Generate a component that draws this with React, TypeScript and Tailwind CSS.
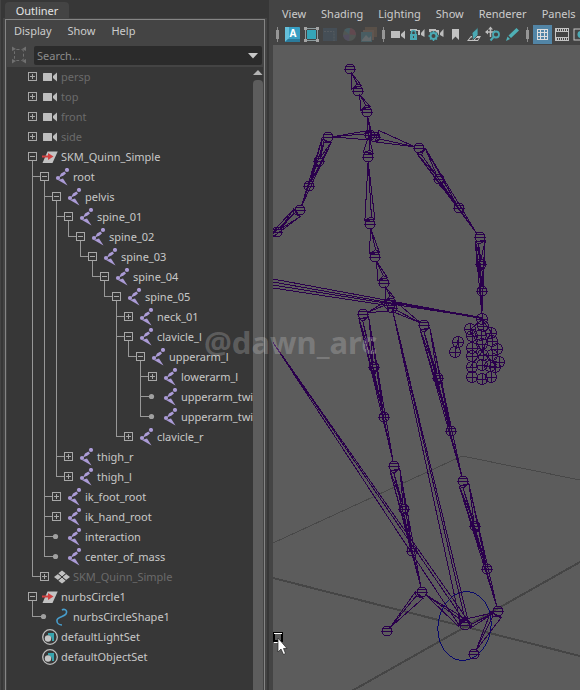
import type { ReactNode } from "react";

type IconKind = "camera" | "transform" | "joint" | "mesh" | "curve" | "set";

interface TreeNode {
  label: string;
  icon: IconKind;
  dim?: boolean;
  toggle?: "open" | "closed" | "leaf" | "none";
  children?: TreeNode[];
}

const joint = (label: string, toggle: TreeNode["toggle"], children?: TreeNode[]): TreeNode => ({
  label,
  icon: "joint",
  toggle,
  children,
});

const camera = (label: string): TreeNode => ({ label, icon: "camera", dim: true, toggle: "closed" });

const scene: TreeNode[] = [
  camera("persp"),
  camera("top"),
  camera("front"),
  camera("side"),
  {
    label: "SKM_Quinn_Simple",
    icon: "transform",
    toggle: "open",
    children: [
      joint("root", "open", [
        joint("pelvis", "open", [
          joint("spine_01", "open", [
            joint("spine_02", "open", [
              joint("spine_03", "open", [
                joint("spine_04", "open", [
                  joint("spine_05", "open", [
                    joint("neck_01", "closed"),
                    joint("clavicle_l", "open", [
                      joint("upperarm_l", "open", [
                        joint("lowerarm_l", "closed"),
                        joint("upperarm_twi", "leaf"),
                        joint("upperarm_twi", "leaf"),
                      ]),
                    ]),
                    joint("clavicle_r", "closed"),
                  ]),
                ]),
              ]),
            ]),
          ]),
          joint("thigh_r", "closed"),
          joint("thigh_l", "closed"),
        ]),
        joint("ik_foot_root", "closed"),
        joint("ik_hand_root", "closed"),
        joint("interaction", "leaf"),
        joint("center_of_mass", "leaf"),
      ]),
      { label: "SKM_Quinn_Simple", icon: "mesh", dim: true, toggle: "closed" },
    ],
  },
  {
    label: "nurbsCircle1",
    icon: "transform",
    toggle: "open",
    children: [{ label: "nurbsCircleShape1", icon: "curve", toggle: "leaf" }],
  },
  { label: "defaultLightSet", icon: "set", toggle: "none" },
  { label: "defaultObjectSet", icon: "set", toggle: "none" },
];

function NodeIcon({ kind }: { kind: IconKind }) {
  return (
    <svg width="16" height="18" viewBox="0 0 16 18" className="mt-px ml-[5px] shrink-0" aria-hidden="true">
      {kind === "camera" && (
        <g fill="#bdbdbd">
          <rect x="1" y="5" width="9" height="8" rx="0.5" />
          <path d="M11 8 15 4.500V13.500L11 10Z" />
        </g>
      )}
      {kind === "transform" && (
        <g>
          <path d="M5.500 3.500H15.700L10.500 15H0.500Z" fill="#c3c3c3" />
          <path d="M0 8.500H7" stroke="#d24040" strokeWidth="2" />
          <path d="M6 5 11.500 8.500 6 12Z" fill="#d24040" />
        </g>
      )}
      {kind === "joint" && (
        <g fill="#ab9bd6">
          <circle cx="13" cy="2" r="2.100" />
          <circle cx="4" cy="10" r="2.100" />
          <path d="M5 9.500 7 5.500 10.500 3.500 12 5.500 9.500 7.500Z" />
          <path d="M4 12 9 10.500 13.500 17.500Z" />
        </g>
      )}
      {kind === "mesh" && (
        <g fill="#c0c0c0">
          <path d="M8 2.500 12 5.500 8 8.500 4 5.500Z" />
          <path d="M4 6 8 9 4 12 0 9Z" />
          <path d="M12 6 16 9 12 12 8 9Z" />
          <path d="M8 9.500 12 12.500 8 15.500 4 12.500Z" />
          <path d="M4 5.500 12 12.500M12 5.500 4 12.500" stroke="#373737" />
        </g>
      )}
      {kind === "curve" && (
        <path
          d="M8 2C10 0.500 14 2 12 6 10 9 2 9 3 13 3 15 5 17 8 17"
          fill="none"
          stroke="#479dcc"
          strokeWidth="1.600"
        />
      )}
      {kind === "set" && (
        <g>
          <circle cx="8" cy="9" r="7.300" fill="none" stroke="#bdbdbd" strokeWidth="1.300" />
          <path d="M6 5H12V13H10A5 5 0 0 0 6 7Z" fill="#38a3ad" />
          <circle cx="6" cy="10.500" r="3.200" fill="#c6c6c6" />
        </g>
      )}
    </svg>
  );
}

function Guide({ kind }: { kind: "none" | "line" | "tee" | "elbow" }) {
  return (
    <span className="flex w-3 shrink-0 flex-col pl-1.5">
      {kind !== "none" && (
        <span
          className={
            kind === "line" ? "h-[10px] border-l border-[#989898]" : "h-[10px] border-b border-l border-[#989898]"
          }
        />
      )}
      {(kind === "line" || kind === "tee") && <span className="h-[10px] border-l border-[#989898]" />}
    </span>
  );
}

function Toggle({ node, nested }: { node: TreeNode; nested: boolean }) {
  const open = node.toggle === "open";
  return (
    <>
      <span className={nested ? "h-[10px] w-0.5 shrink-0 border-b border-[#989898]" : "w-0.5 shrink-0"} />
      <span className="flex w-[9px] shrink-0 flex-col">
        {(open || node.toggle === "closed") && (
          <>
            <button type="button" aria-label={`Toggle ${node.label}`} className="mt-[5px] block h-[9px] w-[9px]">
              <svg width="9" height="9" shapeRendering="crispEdges" stroke="#a8a8a8" fill="none" className="block">
                <rect x="0.500" y="0.500" width="8" height="8" />
                <path d={open ? "M2 4.500H7" : "M2 4.500H7M4.500 2V7"} />
              </svg>
            </button>
            {open && <span className="ml-1 h-1.5 border-l border-[#989898]" />}
          </>
        )}
        {node.toggle === "leaf" && (
          <svg width="9" height="20">
            <path d="M0 9.500H4" stroke="#989898" />
            <circle cx="3.500" cy="9.500" r="2.600" fill="#a0a0a0" />
          </svg>
        )}
      </span>
    </>
  );
}

function Branch({ nodes, trail }: { nodes: TreeNode[]; trail: boolean[] }) {
  const depth = trail.length;
  return (
    <ul>
      {nodes.map((node, i) => {
        const last = i === nodes.length - 1;
        return (
          <li key={i}>
            <div className="flex h-5 pl-[19px]">
              {trail.slice(1).map((more, k) => (
                <Guide key={k} kind={more ? "line" : "none"} />
              ))}
              {depth > 0 && <Guide kind={last ? "elbow" : "tee"} />}
              <Toggle node={node} nested={depth > 0} />
              <NodeIcon kind={node.icon} />
              <span
                className={
                  node.dim
                    ? "ml-[3px] whitespace-nowrap text-[#6b6b6b]"
                    : "ml-[3px] whitespace-nowrap"
                }
              >
                {node.label}
              </span>
            </div>
            {node.children && <Branch nodes={node.children} trail={[...trail, !last]} />}
          </li>
        );
      })}
    </ul>
  );
}

function Outliner() {
  return (
    <aside className="flex w-[269px] shrink-0 flex-col border-l border-[#444444] bg-[#373737]">
      <h1 className="mt-0.5 ml-1 flex h-4 w-16 items-center justify-center rounded-t-sm bg-[#444444] pt-0.5 text-[#e4e4e4]">
        Outliner
      </h1>
      <div className="mr-0.5 ml-0.5 flex min-h-0 flex-1 flex-col bg-[#444444] px-0.5 pt-px">
        <div className="flex min-h-0 flex-1 flex-col border border-b-0 border-[#858585] px-px">
          <nav className="flex h-[21px] items-center gap-4 pl-[7px] text-[#cccccc]">
            <button type="button">Display</button>
            <button type="button">Show</button>
            <button type="button">Help</button>
          </nav>
          <div className="flex h-[26px] items-start pt-[5px] pr-px pl-[5px]">
            <svg width="14" height="18" fill="none" stroke="#707070" aria-hidden="true" className="shrink-0">
              <rect x="2.500" y="3.500" width="9" height="11" rx="2" strokeDasharray="3 2" />
              <path d="M0 0.500 4 3 0 5ZM14 0.500 10 3 14 5ZM0 17.500 4 15 0 13ZM14 17.500 10 15 14 13Z" fill="#707070" stroke="none" />
            </svg>
            <label className="ml-2 flex h-[19px] min-w-0 flex-1 items-center rounded-xs bg-[#2b2b2b] pr-1 pl-[3px]">
              <input
                type="search"
                aria-label="Search"
                placeholder="Search..."
                className="min-w-0 flex-1 bg-transparent outline-none placeholder:text-[#8c8c8c]"
              />
              <svg width="10" height="6" aria-hidden="true">
                <path d="M0 0H10L5 5.500Z" fill="#c8c8c8" />
              </svg>
            </label>
          </div>
          <div className="flex min-h-0 flex-1 bg-[#373737] text-[#c8c8c8]">
            <div className="min-w-0 flex-1 overflow-hidden leading-5">
              <Branch nodes={scene} trail={[]} />
            </div>
            <div className="flex w-[10px] flex-col">
              <svg width="10" height="13" className="shrink-0" aria-hidden="true">
                <path d="M0 8H9.500L5 3Z" fill="#b4b4b4" />
              </svg>
              <div className="flex-1 rounded-t-sm bg-[#5d5d5d]" />
            </div>
          </div>
        </div>
      </div>
    </aside>
  );
}

function Tool({ label, active, faded, children }: { label: string; active?: boolean; faded?: boolean; children: ReactNode }) {
  const base = "flex h-[19px] w-[19px] shrink-0 items-center justify-center";
  return (
    <button type="button" aria-label={label} className={active ? `${base} bg-[#5285a6]` : faded ? `${base} opacity-30` : base}>
      <svg width="17" height="17" viewBox="0 0 17 17" fill="none">
        {children}
      </svg>
    </button>
  );
}

function Divider() {
  return (
    <svg width="11" height="19" className="shrink-0" aria-hidden="true">
      <path d="M5.500 2V17" stroke="#8a8a8a" />
      <path d="M5.500 5V14" stroke="#969696" strokeWidth="3" />
    </svg>
  );
}

function CameraMark() {
  return <path d="M3 4H11V9H3ZM12 7 15.500 3V11L12 9Z" fill="#bdbdbd" />;
}

function Toolbar() {
  return (
    <div className="flex h-[19px] overflow-hidden pl-[3px]">
      <Divider />
      <Tool label="Arnold">
        <rect x="1" y="1" width="15" height="15" rx="1" fill="#379fc4" />
        <path d="M1 1H5V12L1 16Z" fill="#65bfda" />
        <path d="M1 16 4 13H16V16Z" fill="#2b7b9b" />
        <text x="9" y="11" textAnchor="middle" fontSize="10" fontWeight="700" fill="#ffffff">
          A
        </text>
      </Tool>
      <Tool label="Region">
        <rect x="4" y="4" width="9" height="9" fill="#35a5b8" />
        <path d="M2.500 1V16M14.500 1V16M1 2.500H16M1 14.500H16" stroke="#8d9c9f" />
        <path d="M1 1H4V4H1ZM13 1H16V4H13ZM1 13H4V16H1ZM13 13H16V16H13Z" fill="#a5a5a5" />
      </Tool>
      <Tool label="Crop" faded>
        <rect x="1" y="2" width="14" height="13" fill="#4a6880" />
        <path d="M2 5.500H12V15" stroke="#8090a0" strokeDasharray="2 1" />
      </Tool>
      <Tool label="Colour" faded>
        <circle cx="8.500" cy="8.500" r="6.500" fill="#718078" />
        <path d="M8.500 8.500 3 4A7 7 0 0 1 9 2Z" fill="#4e96a8" />
        <path d="M8.500 8.500 9 2A7 7 0 0 1 15 9Z" fill="#a5566a" />
        <path d="M8.500 8.500 2 9A7 7 0 0 0 8 15Z" fill="#72679c" />
      </Tool>
      <Tool label="Images" faded>
        <path d="M5 1H17V11H5Z" fill="#8c6e54" />
        <path d="M3 4H14V14H3Z" fill="#a27d6a" />
        <path d="M1 6H12V16H1Z" fill="#5597a8" />
        <path d="M2 14 6 9 9 12 11 10V15H2Z" fill="#b0c0c4" />
      </Tool>
      <Divider />
      <Tool label="Select camera">
        <path d="M1 5H10V12H1ZM11 8 15 4.500V13L11 10Z" fill="#bdbdbd" />
      </Tool>
      <Tool label="Lock camera">
        <CameraMark />
        <path d="M1 3H8V6H1Z" fill="#bdbdbd" />
        <rect x="0" y="5" width="9" height="11" fill="#444444" />
        <rect x="1" y="8" width="7" height="6" fill="#4aa9b4" />
        <path d="M2.500 8V6.500A2 2 0 0 1 6.500 6.500V8" stroke="#4aa9b4" strokeWidth="1.500" />
        <path d="M4.500 10V12" stroke="#444444" />
      </Tool>
      <Tool label="Camera attributes">
        <CameraMark />
        <path d="M1 3H8V6H1Z" fill="#bdbdbd" />
        <circle cx="5.500" cy="10" r="5" fill="#444444" />
        <circle cx="5.500" cy="10" r="3" stroke="#4aa9b4" strokeWidth="2" />
        <path d="M5.500 5V6.500M5.500 13.500V15M0.500 10H2M9 10H10.500M2 6.500 3 7.500M9 6.500 8 7.500M2 13.500 3 12.500M9 13.500 8 12.500" stroke="#4aa9b4" strokeWidth="1.500" />
      </Tool>
      <Tool label="Bookmarks">
        <path d="M5 3H12V14L8.500 10.500 5 14Z" fill="#c3c3c3" />
      </Tool>
      <Tool label="Image plane">
        <path d="M1 15 5 10H15L12 15Z" fill="#c3c3c3" />
        <path d="M3 14 5 11.500H8L6 14ZM10 12H13L11.500 14H9Z" fill="#444444" />
        <path d="M6 7 12 1.500V9L7 14Z" fill="#4aa9b4" stroke="#444444" strokeWidth="0.800" />
      </Tool>
      <Tool label="Pan and zoom">
        <path d="M1 6H10M5.500 2V11" stroke="#bdbdbd" strokeWidth="1.500" />
        <path d="M0 6 3 3.500V8.500ZM5.500 0.500 8 3.500H3ZM11 6 9 4V8Z" fill="#bdbdbd" />
        <circle cx="11" cy="8.500" r="3" fill="#444444" stroke="#4aa9b4" strokeWidth="1.800" />
        <path d="M8.500 11 5.500 14.500" stroke="#4aa9b4" strokeWidth="2" />
      </Tool>
      <Tool label="Grease pencil">
        <path d="M2 15 3.500 10.500 6 13ZM4.500 9.500 12.500 2 15 4.500 7 12Z" fill="#4fb0b6" />
      </Tool>
      <Divider />
      <Tool label="Grid" active>
        <path d="M3.500 3.500H13.500V13.500H3.500ZM6.500 3V14M10.500 3V14M3 6.500H14M3 10.500H14" stroke="#dddddd" shapeRendering="crispEdges" />
      </Tool>
      <Tool label="Film gate">
        <path
          d="M2.500 3V14M15.500 3V14M2 5.500H16M2 11.500H16M2 2.500H16M2 14.500H16"
          stroke="#c3c3c3"
          shapeRendering="crispEdges"
        />
        <path d="M3 4H16M3 13H16" stroke="#c3c3c3" strokeWidth="2" strokeDasharray="1 1" shapeRendering="crispEdges" />
      </Tool>
      <Tool label="Resolution gate">
        <rect x="2" y="3" width="14" height="11" stroke="#c3c3c3" />
        <circle cx="9" cy="8.500" r="3.500" fill="#4aa9b4" />
      </Tool>
    </div>
  );
}

type Point = [number, number];

/* Each limb: root joint, end joint, and the twist joints between them. */
const limbs: { from: Point; to: Point; twists: Point[] }[] = [
  { from: [328, 137], to: [300, 210], twists: [[319, 161], [309, 186]] },
  { from: [300, 210], to: [256, 250], twists: [[277, 232]] },
  { from: [419, 148], to: [479, 237], twists: [[439, 179], [459, 208]] },
  { from: [480, 237], to: [482, 318], twists: [[481, 264], [482, 291]] },
  { from: [363, 314], to: [394, 466], twists: [[374, 367], [384, 417]] },
  { from: [394, 466], to: [422, 592], twists: [[404, 509], [412, 551]] },
  { from: [424, 325], to: [463, 481], twists: [[438, 378], [451, 431]] },
  { from: [463, 481], to: [498, 611], twists: [[475, 526], [487, 569]] },
];

const bones: { from: Point; to: Point; width: number }[] = [
  { from: [358, 91], to: [350, 69], width: 5 },
  { from: [367, 112], to: [358, 91], width: 5 },
  { from: [370, 136], to: [367, 112], width: 2 },
  { from: [368, 157], to: [369, 132], width: 5 },
  { from: [370, 224], to: [368, 157], width: 5 },
  { from: [375, 257], to: [370, 224], width: 5 },
  { from: [384, 283], to: [375, 257], width: 5 },
  { from: [391, 303], to: [384, 283], width: 5 },
  { from: [375, 135], to: [328, 137], width: 5 },
  { from: [373, 135], to: [419, 148], width: 6 },
  { from: [391, 305], to: [363, 314], width: 5 },
  { from: [391, 305], to: [424, 325], width: 5 },
  { from: [422, 592], to: [387, 631], width: 5 },
  { from: [498, 611], to: [474, 654], width: 6 },
  { from: [465, 625], to: [422, 592], width: 5 },
  { from: [465, 625], to: [498, 611], width: 5 },
  { from: [465, 625], to: [391, 303], width: 4 },
  { from: [465, 625], to: [270, 338], width: 5 },
];

const joints: Point[] = [
  [350, 69], [358, 91], [367, 112], [368, 157], [370, 224], [375, 257], [384, 283], [391, 303],
  [370, 135], [375, 137], [387, 631], [474, 654], [465, 625], [392, 308], [422, 592], [498, 611],
];

const handJoints: Point[] = [
  [482, 319], [470, 329], [483, 326], [491, 333], [458, 342], [455, 352], [481, 335], [472, 336],
  [472, 348], [482, 344], [492, 341], [497, 349], [472, 356], [483, 355], [492, 355], [499, 362], [495, 367],
  [472, 367], [482, 365], [490, 366], [472, 377], [482, 379], [491, 377],
];

function bonePath({ from, to, width }: { from: Point; to: Point; width: number }) {
  const dx = to[0] - from[0];
  const dy = to[1] - from[1];
  const len = Math.hypot(dx, dy);
  const ux = dx / len;
  const uy = dy / len;
  const corner = (side: number, ahead: number) =>
    `${from[0] + ux * ahead - uy * side} ${from[1] + uy * ahead + ux * side}`;
  const tip = `${to[0] - ux * 4} ${to[1] - uy * 4}`;
  return `M${corner(width, 4)}L${tip}L${corner(-width, 4)}ZM${corner(width, 4)}L${corner(width / 3, 7)}L${tip}M${corner(width / 3, 7)}L${corner(-width, 4)}`;
}

function JointMark({ at, r = 5 }: { at: Point; r?: number }) {
  return (
    <g transform={`translate(${at[0]} ${at[1]})`}>
      <circle r={r} />
      <path d={`M${-r - 1} 0.500H${r + 1}M${-r + 1} -2Q0 ${-r + 1} ${r - 1} -2`} />
    </g>
  );
}

function Viewport() {
  return (
    <main className="relative ml-1 min-h-0 flex-1 overflow-hidden bg-[#5c5c5c]">
      <svg className="block h-full w-full" aria-label="Skeleton in perspective view" shapeRendering="crispEdges">
        <g transform="translate(-273 -45)" fill="none">
          <path d="M273 543 462 456 580 480" stroke="#484848" />
          <path d="M273 578 580 656M350 692 580 562" stroke="#454545" strokeWidth="2" />
          <ellipse cx="464.500" cy="626" rx="26.500" ry="34.500" transform="rotate(8 464.500 626)" stroke="#08086c" />
          <g stroke="#2a004c">
            {limbs.map((limb, i) => (
              <g key={i}>
                {[...limb.twists, limb.to].map((end, k) => (
                  <path key={k} d={bonePath({ from: limb.from, to: end, width: 5 })} />
                ))}
                {limb.twists.length > 1 && (
                  <path d={bonePath({ from: limb.twists[0], to: limb.twists[1], width: 3 })} />
                )}
                {[limb.from, ...limb.twists].map((at, k) => (
                  <JointMark key={k} at={at} />
                ))}
              </g>
            ))}
            {bones.map((bone, i) => (
              <path key={i} d={bonePath(bone)} />
            ))}
            {joints.map((at, i) => (
              <JointMark key={i} at={at} />
            ))}
            {handJoints.map(([x, y], i) => (
              <g key={i} transform={`translate(${x} ${y})`}>
                <circle r="5.500" />
                <path d="M-6 0.500H6M0.500 -6V6" />
              </g>
            ))}
            <path d="M273 279 391 301 482 318M273 282 391 303M273 285 391 304 482 318M273 288 391 306" />
            <path d="M392 302 430 309 482 318" strokeWidth="2" />
            <path d="M458 340 455 354M470 330 482 352 470 367M491 332 482 352 497 365M482 319 470 330M482 319 491 332" />
          </g>
        </g>
      </svg>
      <svg width="19" height="26" className="absolute top-[586px] left-0" aria-hidden="true">
        <rect x="1" y="2" width="8" height="8" fill="none" stroke="#000000" strokeWidth="2" />
        <path d="M1 2.500H9M1 11.500H6" stroke="#ffffff" />
        <path d="M5 7V21L8 18 10.500 23.500 12.500 22.500 10.500 17.500H14Z" fill="#ffffff" stroke="#222222" strokeWidth="0.700" />
      </svg>
    </main>
  );
}

export default function App() {
  return (
    <div className="relative flex h-screen overflow-hidden bg-[#444444] font-['Noto_Sans','Open_Sans',sans-serif] text-[11px] leading-4">
      <Outliner />
      <section className="flex min-w-0 flex-1 flex-col">
        <nav className="flex h-[25px] gap-[15px] overflow-hidden pt-1.5 pl-[13px] whitespace-nowrap text-[#cccccc]">
          <button type="button" className="h-4">View</button>
          <button type="button" className="h-4">Shading</button>
          <button type="button" className="h-4">Lighting</button>
          <button type="button" className="h-4">Show</button>
          <button type="button" className="h-4">Renderer</button>
          <button type="button" className="h-4">Panels</button>
        </nav>
        <Toolbar />
        <div className="h-px shrink-0" />
        <Viewport />
      </section>
      <p className="pointer-events-none absolute top-[322px] left-[204px] text-[31px] leading-10 font-bold text-white/20">
        @dawn_arc
      </p>
    </div>
  );
}
